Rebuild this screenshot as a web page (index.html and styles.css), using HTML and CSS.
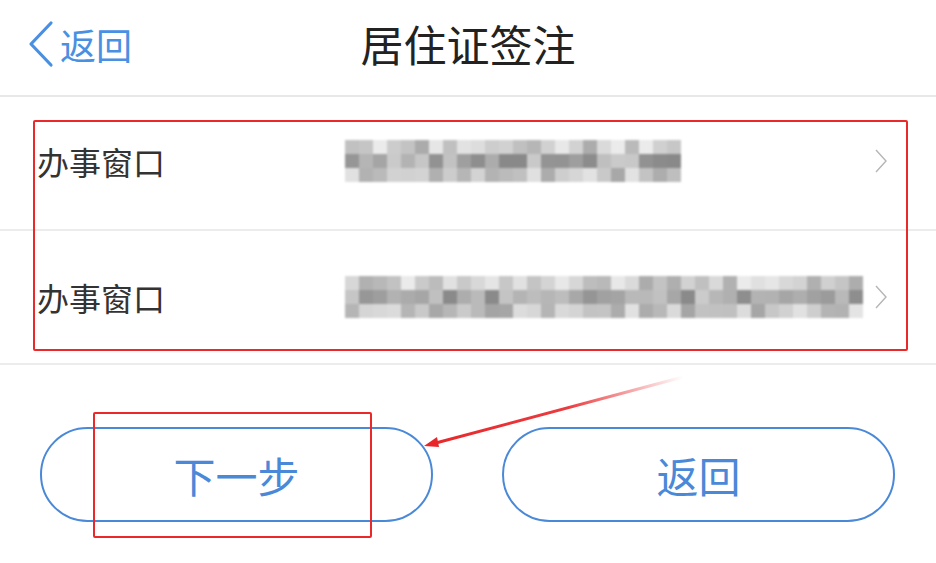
FILE: index.html
```html
<!DOCTYPE html>
<html lang="zh-CN">
<head>
  <meta charset="UTF-8">
  <meta name="viewport" content="width=device-width, initial-scale=1.0">
  <title>居住证签注</title>
  <link rel="stylesheet" href="styles.css">
</head>
<body>
  <div class="page">
    <!-- Header -->
    <header class="nav">
      <a class="nav__back">
        <svg class="nav__chevron" width="26" height="48" viewBox="0 0 26 48">
          <polyline points="23,3 3,24 23,45" fill="none" stroke="#4a90e2" stroke-width="3.2" stroke-linecap="round" stroke-linejoin="round"/>
        </svg>
        <span class="nav__back-text">返回</span>
      </a>
      <h1 class="nav__title">居住证签注</h1>
      <span class="nav__spacer"></span>
    </header>

    <!-- List -->
    <div class="list">
      <div class="list__row">
        <span class="list__label">办事窗口</span>
        <span class="list__value" data-cols="24" data-seed="3"></span>
        <svg class="list__arrow" width="14" height="26" viewBox="0 0 14 26">
          <polyline points="2,2 12,13 2,24" fill="none" stroke="#b5b5b5" stroke-width="1.4"/>
        </svg>
      </div>
      <div class="list__row">
        <span class="list__label">办事窗口</span>
        <span class="list__value" data-cols="37" data-seed="11"></span>
        <svg class="list__arrow" width="14" height="26" viewBox="0 0 14 26">
          <polyline points="2,2 12,13 2,24" fill="none" stroke="#b5b5b5" stroke-width="1.4"/>
        </svg>
      </div>
    </div>

    <!-- Buttons -->
    <div class="actions">
      <button class="btn">下一步</button>
      <button class="btn">返回</button>
    </div>

    <!-- Annotations -->
    <div class="mark mark--list"></div>
    <div class="mark mark--btn"></div>
    <svg class="pointer" width="936" height="563" viewBox="0 0 936 563">
      <defs>
        <linearGradient id="fade" x1="683" y1="377" x2="427" y2="445" gradientUnits="userSpaceOnUse">
          <stop offset="0" stop-color="#e8262a" stop-opacity="0"/>
          <stop offset="0.45" stop-color="#e8262a" stop-opacity="0.9"/>
          <stop offset="1" stop-color="#e8262a"/>
        </linearGradient>
      </defs>
      <line x1="683" y1="377" x2="432" y2="444" stroke="url(#fade)" stroke-width="3" stroke-linecap="round"/>
      <polygon points="424,446 437,437 439,447" fill="#e8262a"/>
    </svg>
  </div>
  <script src="script.js"></script>
</body>
</html>
```

FILE: styles.css
```css
/* Reset */
*, *::after, *::before {
  margin: 0;
  padding: 0;
  box-sizing: border-box;
}

body {
  background-color: #fff;
  font-family: "Noto Sans CJK SC", "Noto Sans", sans-serif;
}

.page {
  position: relative;
  width: 936px;
  height: 563px;
  overflow: hidden;
}

/* Header */
.nav {
  display: grid;
  grid-template-columns: 1fr auto 1fr;
  align-items: center;
  height: 97px;
  padding-bottom: 8px;
  border-bottom: 2px solid #e8e8e8;
}

.nav__back {
  display: flex;
  align-items: center;
  gap: 6px;
  padding-left: 28px;
  color: #4a90e2;
}

.nav__back-text {
  font-size: 36px;
  line-height: 1;
}

.nav__title {
  font-size: 43px;
  font-weight: 400;
  color: #222;
  line-height: 1;
}

/* List */
.list__row {
  display: flex;
  align-items: center;
  height: 134px;
  padding-left: 37px;
  padding-right: 48px;
  border-bottom: 2px solid #ececec;
}

.list__row:first-child {
  padding-bottom: 4px;
}

.list__label {
  width: 308px;
  flex-shrink: 0;
  font-size: 32px;
  color: #333;
  line-height: 1;
}

.list__value {
  display: grid;
  grid-auto-flow: column;
  grid-template-rows: repeat(3, 14px);
  grid-auto-columns: 14px;
  filter: blur(1.2px);
}

.list__value span {
  display: block;
}

.list__arrow {
  margin-left: auto;
}

/* Buttons */
.actions {
  display: flex;
  gap: 69px;
  padding: 62px 40px 0;
}

.btn {
  width: 393px;
  height: 95px;
  border: 2px solid #4a88d8;
  border-radius: 48px;
  background: #fff;
  color: #4a88d8;
  font-family: "Noto Sans CJK SC", "Noto Sans", sans-serif;
  font-size: 42px;
  line-height: 1;
}

/* Annotations */
.mark {
  position: absolute;
  border: 2px solid #ea2a2a;
  border-radius: 2px;
}

.mark--list {
  left: 33px;
  top: 120px;
  width: 875px;
  height: 231px;
}

.mark--btn {
  left: 93px;
  top: 412px;
  width: 279px;
  height: 126px;
}

.pointer {
  position: absolute;
  left: 0;
  top: 0;
}
```

FILE: script.js
```js
// pixelated (blurred) address text
document.querySelectorAll('.list__value').forEach(function (el) {
  var cols = +el.dataset.cols;
  var seed = +el.dataset.seed;
  function rand() {
    seed = (seed * 9301 + 49297) % 233280;
    return seed / 233280;
  }
  for (var c = 0; c < cols; c++) {
    for (var r = 0; r < 3; r++) {
      var base = r === 1 ? 170 : (r === 0 ? 205 : 195);
      var g = Math.round(base + (rand() - 0.5) * 70);
      if (g > 235) g = 235;
      var cell = document.createElement('span');
      cell.style.background = 'rgb(' + g + ',' + g + ',' + g + ')';
      el.appendChild(cell);
    }
  }
});
```
